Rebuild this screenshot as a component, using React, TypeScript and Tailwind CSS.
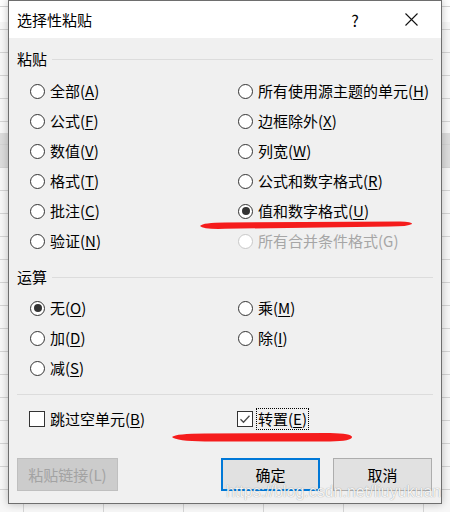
import React from "react";

type Opt = { label: string; mn?: string; checked?: boolean; disabled?: boolean };

const PASTE_LEFT: Opt[] = [
  { label: "全部", mn: "A" },
  { label: "公式", mn: "F" },
  { label: "数值", mn: "V" },
  { label: "格式", mn: "T" },
  { label: "批注", mn: "C" },
  { label: "验证", mn: "N" },
];

const PASTE_RIGHT: Opt[] = [
  { label: "所有使用源主题的单元", mn: "H" },
  { label: "边框除外", mn: "X" },
  { label: "列宽", mn: "W" },
  { label: "公式和数字格式", mn: "R" },
  { label: "值和数字格式", mn: "U", checked: true },
  { label: "所有合并条件格式(G)", disabled: true },
];

const OPS_LEFT: Opt[] = [
  { label: "无", mn: "O", checked: true },
  { label: "加", mn: "D" },
  { label: "减", mn: "S" },
];

const OPS_RIGHT: Opt[] = [
  { label: "乘", mn: "M" },
  { label: "除", mn: "I" },
];

function Label({ label, mn }: { label: string; mn?: string }) {
  if (!mn) return <span>{label}</span>;
  return (
    <span>
      {label}(<span className="underline underline-offset-2">{mn}</span>)
    </span>
  );
}

function Radio({ label, mn, checked, disabled }: Opt) {
  return (
    <div className="flex h-[30px] items-center gap-[5px]">
      <div
        className={`flex h-[15px] w-[15px] items-center justify-center rounded-full border bg-white ${
          disabled ? "border-[#c8c8c8]" : "border-[#333333]"
        }`}
      >
        {checked && <div className="h-[8px] w-[8px] rounded-full bg-[#333333]" />}
      </div>
      <div className={disabled ? "text-[#a6a6a6]" : "text-black"}>
        <Label label={label} mn={mn} />
      </div>
    </div>
  );
}

function SectionHeader({ title, className }: { title: string; className: string }) {
  return (
    <div className={`flex h-[20px] items-center ${className}`}>
      <span>{title}</span>
      <div className="ml-[5px] h-px flex-1 bg-[#dcdcdc]" />
    </div>
  );
}

function Checkbox({ checked }: { checked?: boolean }) {
  return (
    <div className="flex h-[16px] w-[16px] items-center justify-center border border-[#333333] bg-white">
      {checked && (
        <svg width="12" height="12" viewBox="0 0 12 12">
          <path d="M1.5 6.2 L4.5 9.2 L10.5 2.8" fill="none" stroke="#4a4a4a" strokeWidth="1.3" />
        </svg>
      )}
    </div>
  );
}

export default function App() {
  return (
    <div className="relative h-[512px] w-[450px] overflow-hidden bg-[#f7f7f7] bg-[linear-gradient(#d4d4d4_1px,transparent_1px),linear-gradient(90deg,#d4d4d4_1px,transparent_1px),linear-gradient(to_bottom,#ffffff_0px,#ffffff_22px,transparent_22px,transparent_133px,#dcdcdc_133px,#dcdcdc_167px,transparent_167px)] bg-[size:80px_23px,80px_23px,100%_100%] bg-[position:23px_6px,23px_6px,0_0] font-['Microsoft_YaHei','Noto_Sans_CJK_SC',sans-serif] text-[15px] leading-[20px] text-black">
      {/* Dialog */}
      <div className="ml-[8px] w-[434px] border border-[#6e6e6e] bg-[#f0f0f0] shadow-[0_0_8px_rgba(0,0,0,0.25)]">
        {/* Title bar */}
        <div className="flex h-[37px] items-center bg-white pl-[8px]">
          <span>选择性粘贴</span>
          <div className="ml-auto flex gap-[10px] pr-[7px]">
            <div className="flex w-[46px] justify-center text-[16px]">?</div>
            <div className="flex w-[46px] items-center justify-center">
              <svg width="13" height="13" viewBox="0 0 13 13">
                <path d="M0.5 0.5 L12.5 12.5 M12.5 0.5 L0.5 12.5" stroke="#111" strokeWidth="1.1" />
              </svg>
            </div>
          </div>
        </div>

        {/* Body */}
        <div className="px-[8px] pb-[12px]">
          <SectionHeader title="粘贴" className="mt-[11px]" />
          <div className="mt-[7px] grid grid-cols-[208px_1fr] pl-[13px]">
            <div className="flex flex-col">
              {PASTE_LEFT.map((o) => (
                <Radio key={o.label} {...o} />
              ))}
            </div>
            <div className="flex flex-col">
              {PASTE_RIGHT.map((o) => (
                <Radio key={o.label} {...o} />
              ))}
            </div>
          </div>

          <SectionHeader title="运算" className="mt-[11px]" />
          <div className="mt-[6px] grid grid-cols-[208px_1fr] pl-[13px]">
            <div className="flex flex-col">
              {OPS_LEFT.map((o) => (
                <Radio key={o.label} {...o} />
              ))}
            </div>
            <div className="flex flex-col">
              {OPS_RIGHT.map((o) => (
                <Radio key={o.label} {...o} />
              ))}
            </div>
          </div>

          <div className="mt-[11px] h-px bg-[#dcdcdc]" />

          <div className="mt-[9px] grid h-[30px] grid-cols-[208px_1fr] items-center pl-[12px]">
            <div className="flex items-center gap-[5px]">
              <Checkbox />
              <Label label="跳过空单元" mn="B" />
            </div>
            <div className="flex items-center gap-[3px]">
              <Checkbox checked />
              <div className="border border-dotted border-black px-[1px]">
                <Label label="转置" mn="E" />
              </div>
            </div>
          </div>

          <div className="mt-[24px] flex items-center justify-between pr-[1px]">
            <div className="flex h-[33px] w-[101px] items-center justify-center border border-[#bfbfbf] bg-[#cccccc] text-[#a3a3a3]">
              粘贴链接(L)
            </div>
            <div className="flex gap-[13px]">
              <div className="flex h-[33px] w-[99px] items-center justify-center border-2 border-[#0078d7] bg-[#e1e1e1]">
                确定
              </div>
              <div className="flex h-[33px] w-[99px] items-center justify-center border border-[#adadad] bg-[#e1e1e1]">
                取消
              </div>
            </div>
          </div>
        </div>
      </div>

      {/* Red hand-drawn underlines */}
      <svg className="pointer-events-none absolute left-0 top-0" width="450" height="512" viewBox="0 0 450 512">
        <path
          d="M200 226 Q203 222.5 225 222.5 L400 221.5 Q413 222 412 224 Q408 226.5 390 226.5 L225 228.8 Q203 229.5 200 226 Z"
          fill="#f51c1c"
        />
        <path
          d="M172 437 Q176 433.5 205 433.5 L330 433 Q352 433.5 352 437 Q352 441 330 441.5 L205 441.5 Q176 441 172 437 Z"
          fill="#f51c1c"
        />
      </svg>

      {/* Watermark */}
      <div className="pointer-events-none absolute left-[226px] top-[484px] font-['Liberation_Sans',Arial,sans-serif] text-[16px] leading-none text-white/90 [text-shadow:0_0_1px_rgba(0,0,0,0.45)]">
        https://blog.csdn.net/liuyukuan
      </div>
    </div>
  );
}
